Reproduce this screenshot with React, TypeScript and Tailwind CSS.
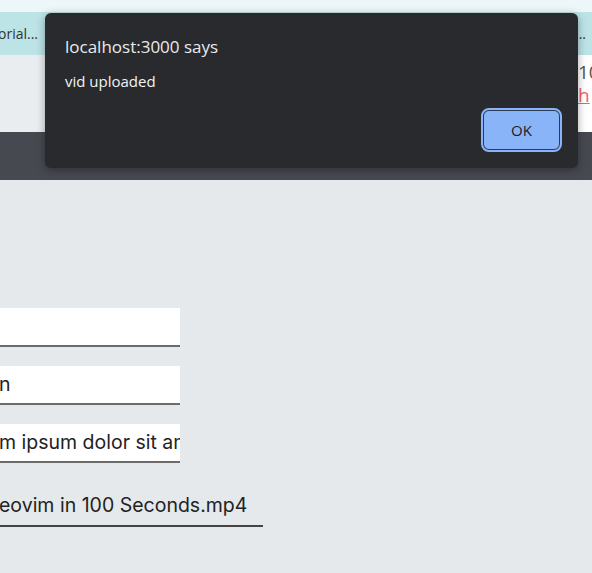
export default function App() {
  return (
    <div className="relative h-[573px] w-[592px] overflow-hidden bg-[#e5e9ec] font-['Inter',sans-serif]">
      {/* top strip */}
      <div className="h-[12px] bg-[#edf6f8]" />
      {/* bookmark / tab band */}
      <div className="flex h-[43px] items-center justify-between bg-[#bce3e6] pr-[6px] font-['Open_Sans',sans-serif] text-[14px] text-[#333]">
        <span className="-ml-[2px]">orial...</span>
        <span>...</span>
      </div>
      {/* header area */}
      <div className="flex h-[77px] justify-end bg-[#e9edf0]">
        <div className="flex w-[14px] flex-col overflow-hidden bg-white pt-[6px] font-['Open_Sans',sans-serif] text-[19px] leading-[23px]">
          <span className="whitespace-nowrap text-[#555]">10</span>
          <span className="whitespace-nowrap text-[#f0606a] underline">h</span>
        </div>
      </div>
      {/* dark nav band */}
      <div className="h-[48px] bg-[#474950]" />

      {/* form */}
      <div className="flex flex-col pt-[128px] text-[19.5px] text-[#222]">
        <div className="h-[39px] w-[180px] border-b-2 border-[#6b6b6b] bg-white" />
        <div className="mt-[19px] flex h-[39px] w-[180px] items-center overflow-hidden whitespace-nowrap border-b-2 border-[#6b6b6b] bg-white">
          <span className="-ml-[1px]">n</span>
        </div>
        <div className="mt-[19px] flex h-[39px] w-[180px] items-center overflow-hidden whitespace-nowrap border-b-2 border-[#6b6b6b] bg-white">
          <span className="-ml-[1px]">m ipsum dolor sit amet</span>
        </div>
        <div className="mt-[24px] flex h-[40px] w-[263px] items-center overflow-hidden whitespace-nowrap border-b-2 border-[#444]">
          <span className="-ml-[1px]">eovim in 100 Seconds.mp4</span>
        </div>
      </div>

      {/* alert dialog */}
      <div className="absolute left-[45px] top-[13px] flex h-[155px] w-[533px] flex-col rounded-[6px] bg-[#292a2d] px-[20px] pt-[22px] font-['Open_Sans',sans-serif] shadow-[0_2px_8px_rgba(0,0,0,0.35)]">
        <div className="text-[17px] leading-[24px] text-[#e8eaed]">localhost:3000 says</div>
        <div className="mt-[12px] text-[15px] leading-[20px] text-[#f1f3f4]">vid uploaded</div>
        <div className="mt-auto mb-[18px] flex justify-end">
          <button className="-mr-[2px] flex h-[40px] w-[77px] items-center justify-center rounded-[6px] border border-[#2b3a55] bg-[#8ab4f8] text-[15px] text-[#202124] outline outline-2 outline-offset-0 outline-[#8ab4f8]">
            OK
          </button>
        </div>
      </div>
    </div>
  );
}
